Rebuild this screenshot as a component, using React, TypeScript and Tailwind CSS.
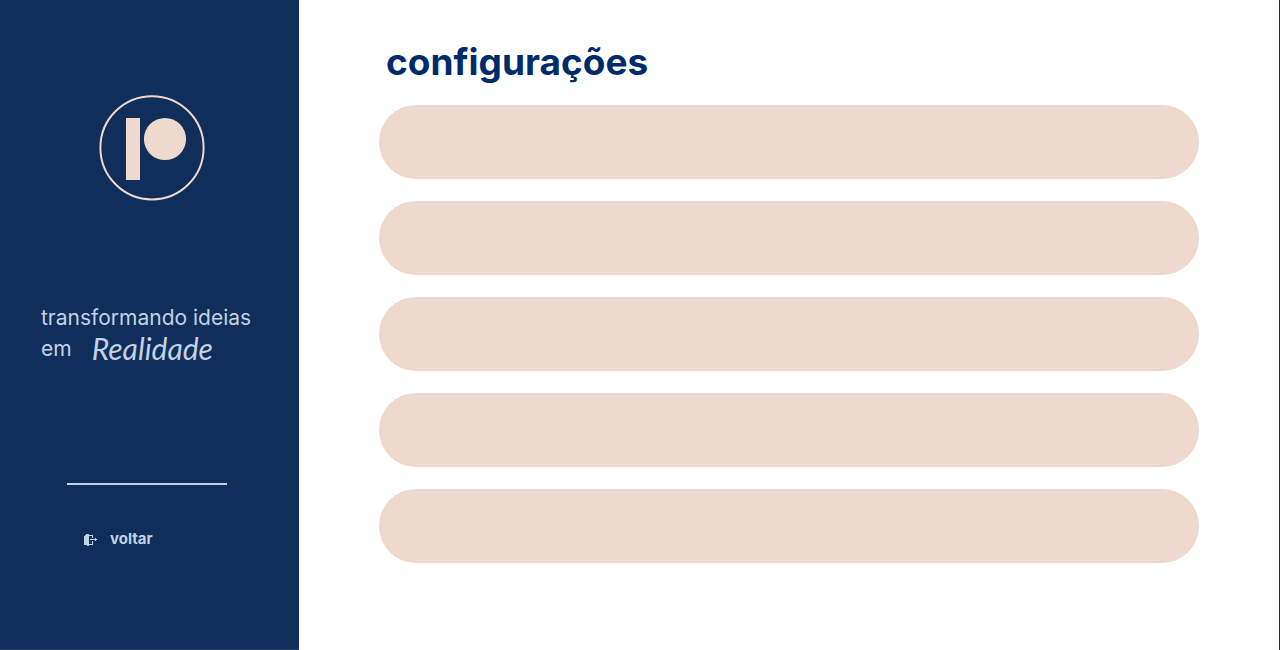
const settings = [1, 2, 3, 4, 5];

function Logo() {
  return (
    <svg className="mx-auto h-[106px] w-[106px]" viewBox="0 0 106 106" role="img" aria-label="Logo">
      <circle cx="53" cy="52.8" r="51.6" fill="none" stroke="#efd9cf" strokeWidth="2" />
      <rect x="27" y="23" width="14" height="62" fill="#efd9cf" />
      <circle cx="66" cy="44" r="21.1" fill="#efd9cf" />
    </svg>
  );
}

function ExitIcon() {
  return (
    <svg className="h-[13px] w-[13px]" viewBox="0 0 13 13" aria-hidden="true" shapeRendering="crispEdges">
      <path d="M0 3h1V2h1V1h3v12H3v-1H0z" fill="#c3d1e6" />
      <path d="M5 2h4v3H8V3H5zM5 12h4V8H8v3H5zM6 6h5V5h1v1h1v1h-1v1h-1V7H6z" fill="#c3d1e6" />
    </svg>
  );
}

export default function App() {
  return (
    <div className="flex min-h-screen border-r border-[#102e59] bg-white font-['Inter',sans-serif]">
      <aside className="w-[299px] shrink-0 border-b border-[#24416a] bg-[#0f2e59] pt-[95px] text-[#c3d1e6]">
        <div className="pl-1">
          <Logo />
        </div>
        <p className="mt-[101px] pl-[41px] text-[21px] leading-[31px]">
          transformando ideias
          <span className="flex h-[31px] items-center gap-5">
            em
            <em className="font-['Lato',sans-serif] text-[30px]">Realidade</em>
          </span>
        </p>
        <hr className="mr-[72px] ml-[67px] mt-[119px] border-t-2 border-[#c3d1e6]" />
        <a href="#voltar" className="mt-11 ml-[84px] inline-flex items-center gap-[13px] text-[15px] leading-5 font-bold">
          <ExitIcon />
          voltar
        </a>
      </aside>
      <main className="grow px-20 pt-[35px]">
        <h1 className="pl-[7px] text-[37px] leading-[54px] font-bold text-[#002b6b]">configurações</h1>
        <ul className="mt-4 flex flex-col gap-[22px]">
          {settings.map((id) => (
            <li key={id} className="h-[74px] rounded-full bg-[#efd9cf]" />
          ))}
        </ul>
      </main>
    </div>
  );
}
